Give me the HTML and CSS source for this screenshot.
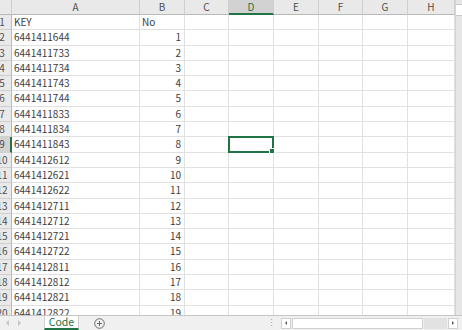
FILE: index.html
```html
<!DOCTYPE html>
<html lang="ja">
  <head>
    <meta charset="UTF-8" />
    <meta name="viewport" content="width=device-width, initial-scale=1.0" />
    <title>Code</title>
    <link rel="stylesheet" href="styles.css">
  </head>
  <body>
    <div class="book">
      <div class="sheet-area">
        <div class="grid" id="grid"></div>
        <div class="vscroll">
          <div class="vscroll-top"></div>
        </div>
      </div>

      <!-- Sheet tabs + horizontal scroll -->
      <div class="tabbar">
        <div class="tab-nav">
          <span class="nav-arrow left"></span>
          <span class="nav-arrow right"></span>
        </div>
        <div class="tab active">Code</div>
        <div class="add-sheet">
          <svg width="11" height="11" viewBox="0 0 11 11">
            <circle cx="5.5" cy="5.5" r="4.8" fill="none" stroke="#6b6b6b" stroke-width="1" />
            <path d="M5.5 3v5M3 5.5h5" stroke="#6b6b6b" stroke-width="1" />
          </svg>
        </div>
        <div class="spacer"></div>
        <div class="split-dots">&#8942;</div>
        <div class="hscroll">
          <div class="hs-btn"><span class="hs-arrow left"></span></div>
          <div class="hs-track"></div>
          <div class="hs-gap"></div>
          <div class="hs-btn"><span class="hs-arrow right"></span></div>
        </div>
      </div>
    </div>

    <script>
      const cols = ["A", "B", "C", "D", "E", "F", "G", "H"];
      const keys = [
        "6441411644", "6441411733", "6441411734", "6441411743",
        "6441411744", "6441411833", "6441411834", "6441411843",
        "6441412612", "6441412621", "6441412622", "6441412711",
        "6441412712", "6441412721", "6441412722", "6441412811",
        "6441412812", "6441412821", "6441412822"
      ];
      const grid = document.getElementById("grid");

      function cell(cls, text) {
        const el = document.createElement("div");
        el.className = cls;
        if (text !== undefined) el.textContent = text;
        grid.appendChild(el);
        return el;
      }

      // Column headers
      cell("corner");
      cols.forEach((c) => {
        cell("col-head" + (c === "D" ? " sel" : ""), c);
      });

      // Rows
      for (let r = 1; r <= 20; r++) {
        const head = cell("row-head" + (r === 9 ? " sel" : ""));
        const num = document.createElement("span");
        num.textContent = r;
        head.appendChild(num);

        cols.forEach((c) => {
          let text = "";
          let cls = "cell";
          if (r === 1 && c === "A") text = "KEY";
          if (r === 1 && c === "B") text = "No";
          if (r > 1 && c === "A") text = keys[r - 2];
          if (r > 1 && c === "B") {
            text = r - 1;
            cls += " num";
          }
          if (r === 9 && c === "D") cls += " active";
          cell(cls, text);
        });
      }
    </script>
  </body>
</html>
```

FILE: styles.css
```css
/* General */
body {
  margin: 0;
  overflow: hidden;
  background: white;
  font-family: "Noto Sans CJK JP", "Liberation Sans", sans-serif;
  font-size: 10px;
  color: #3c3c3c;
}

.book {
  width: 462px;
  height: 330px;
  display: flex;
  flex-direction: column;
}

/* Sheet */
.sheet-area {
  flex: 1;
  display: flex;
  overflow: hidden;
}

.grid {
  flex: 1;
  display: grid;
  grid-template-columns: 12px 128px 45px 44px 45px 45px 44px 45px 47px;
  grid-template-rows: 15px;
  grid-auto-rows: 15.3px;
  overflow: hidden;
}

.grid > div {
  box-sizing: border-box;
  border-right: 1px solid #e1e1e1;
  border-bottom: 1px solid #e1e1e1;
  white-space: nowrap;
  overflow: hidden;
  line-height: 14px;
}

.corner,
.col-head,
.row-head {
  background: #e9e9e9;
  color: #505050;
}

.grid > .corner,
.grid > .col-head {
  border-right: 1px solid #cfcfcf;
  border-bottom: 1px solid #b9b9b9;
  text-align: center;
}

.grid > .col-head.sel {
  background: #d2d2d2;
  color: #217346;
  border-bottom: 2px solid #217346;
}

.grid > .row-head {
  border-right: 1px solid #b9b9b9;
  border-bottom: 1px solid #cfcfcf;
}

.row-head span {
  display: block;
  width: 20px;
  margin-left: -8px;
  text-align: center;
}

.grid > .row-head.sel {
  background: #d2d2d2;
  border-right: 2px solid #217346;
}

.cell {
  padding: 0 2px;
}

.cell.num {
  text-align: right;
  padding-right: 3px;
}

/* Active cell */
.grid > .cell.active {
  position: relative;
  overflow: visible;
}

.cell.active::after {
  content: "";
  position: absolute;
  left: -1px;
  top: -1px;
  right: -1px;
  bottom: -1px;
  border: 2px solid #217346;
}

.cell.active::before {
  content: "";
  position: absolute;
  right: -2px;
  bottom: -2px;
  width: 4px;
  height: 4px;
  background: #217346;
  border: 1px solid white;
  z-index: 1;
}

/* Vertical scrollbar */
.vscroll {
  width: 7px;
  background: #e6e6e6;
  border-left: 1px solid #d4d4d4;
  box-sizing: border-box;
}

.vscroll-top {
  height: 10px;
  margin-top: 4px;
  background: white;
  border-top: 1px solid #c8c8c8;
  border-bottom: 1px solid #c8c8c8;
}

/* Tab bar */
.tabbar {
  height: 15px;
  flex-shrink: 0;
  display: flex;
  align-items: stretch;
  background: #f0f0f0;
  border-top: 1px solid #c6c6c6;
  box-sizing: border-box;
}

.tab-nav {
  width: 44px;
  display: flex;
  align-items: center;
  gap: 9px;
  padding-left: 6px;
  box-sizing: border-box;
}

.nav-arrow {
  width: 0;
  height: 0;
  border-top: 3px solid transparent;
  border-bottom: 3px solid transparent;
}

.nav-arrow.left {
  border-right: 3px solid #c4c4c4;
}

.nav-arrow.right {
  border-left: 3px solid #c4c4c4;
}

.tab {
  width: 35px;
  background: white;
  color: #217346;
  text-align: center;
  line-height: 12px;
  font-size: 10.5px;
  border-left: 1px solid #d0d0d0;
  border-right: 1px solid #d0d0d0;
  border-bottom: 2px solid #217346;
  box-sizing: border-box;
}

.add-sheet {
  margin-left: 15px;
  display: flex;
  align-items: center;
}

.spacer {
  flex: 1;
}

.split-dots {
  color: #a0a0a0;
  line-height: 14px;
  font-size: 9px;
  margin-right: 5px;
}

.hscroll {
  width: 177px;
  display: flex;
  align-items: center;
  gap: 1px;
  padding-right: 4px;
}

.hs-btn {
  width: 10px;
  height: 11px;
  background: white;
  border: 1px solid #d0d0d0;
  box-sizing: border-box;
  display: flex;
  align-items: center;
  justify-content: center;
}

.hs-arrow {
  width: 0;
  height: 0;
  border-top: 2px solid transparent;
  border-bottom: 2px solid transparent;
}

.hs-arrow.left {
  border-right: 2px solid #555;
}

.hs-arrow.right {
  border-left: 2px solid #555;
}

.hs-track {
  width: 131px;
  height: 11px;
  background: white;
  border: 1px solid #d0d0d0;
  box-sizing: border-box;
}

.hs-gap {
  flex: 1;
  height: 11px;
  background: #e2e2e2;
}
```
